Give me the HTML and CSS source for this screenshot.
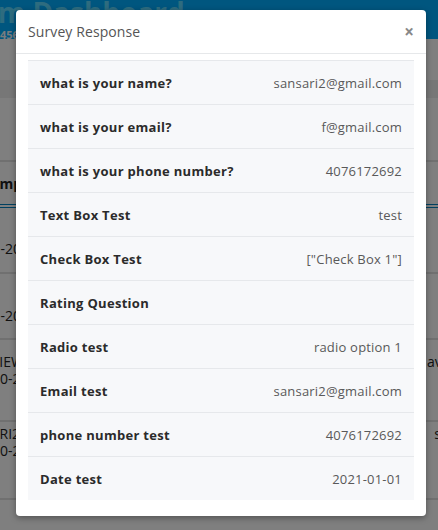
FILE: index.html
```html
<!DOCTYPE html>
<html>
<head>
<meta charset="utf-8">
<link rel="stylesheet" href="styles.css">
</head>
<body>
<div class="page">
  <div class="topbar">
    <div class="brand">Survey Form Dashboard</div>
    <div class="sub">4567 entries</div>
  </div>
  <div class="gap1"></div>
  <div class="band"></div>
  <div class="gap2"></div>
  <div class="thead"><span class="c1">Timp</span><span class="c2"></span></div>
  <div class="trow r1"><div class="c1"><div class="l-date">2021-01-20</div></div></div>
  <div class="trow r2"><div class="c1"><div class="l-date">2021-01-20</div></div></div>
  <div class="trow r3"><div class="c1"><div class="l-a">VIEW</div><div class="l-b">2020-21</div></div><span class="c2">avis</span></div>
  <div class="trow r4"><div class="c1"><div class="l-c">SARI2</div><div class="l-b">2020-21</div></div><span class="c2">s</span></div>
</div>

<div class="backdrop">
  <div class="modal">
    <div class="modal-header">
      <span class="title">Survey Response</span>
      <span class="close">&times;</span>
    </div>
    <div class="modal-body">
      <div class="list">
        <div class="row"><span class="q">what is your name?</span><span class="a">sansari2@gmail.com</span></div>
        <div class="row"><span class="q">what is your email?</span><span class="a">f@gmail.com</span></div>
        <div class="row"><span class="q">what is your phone number?</span><span class="a">4076172692</span></div>
        <div class="row"><span class="q">Text Box Test</span><span class="a">test</span></div>
        <div class="row"><span class="q">Check Box Test</span><span class="a">["Check Box 1"]</span></div>
        <div class="row"><span class="q">Rating Question</span><span class="a"></span></div>
        <div class="row"><span class="q">Radio test</span><span class="a">radio option 1</span></div>
        <div class="row"><span class="q">Email test</span><span class="a">sansari2@gmail.com</span></div>
        <div class="row"><span class="q">phone number test</span><span class="a">4076172692</span></div>
        <div class="row"><span class="q">Date test</span><span class="a">2021-01-01</span></div>
      </div>
    </div>
  </div>
</div>
</body>
</html>
```
FILE: styles.css
```css
* { box-sizing: border-box; }
html, body { margin: 0; padding: 0; }
body {
  width: 438px;
  height: 530px;
  overflow: hidden;
  position: relative;
  font-family: "Open Sans", "DejaVu Sans", sans-serif;
  background: #ffffff;
}
.page {
  width: 438px;
  height: 530px;
  overflow: hidden;
  background: #ffffff;
}
.topbar {
  height: 39px;
  background: #00acfe;
  overflow: hidden;
}
.brand {
  margin-top: -5px;
  margin-left: -150px;
  font-size: 28px;
  font-weight: 700;
  color: #5cd8ff;
  white-space: nowrap;
  line-height: 34px;
}
.sub {
  margin-top: 0;
  margin-left: 0;
  font-size: 11px;
  font-weight: 700;
  color: #f0f8ff;
  white-space: nowrap;
  line-height: 12px;
}
.gap1 { height: 41px; }
.band { height: 18px; background: #eeeeee; }
.gap2 { height: 64px; border-bottom: 2px solid #e0e0e0; }
.thead {
  height: 46px;
  display: flex;
  align-items: center;
  border-bottom: 4px double #0080c0;
  font-weight: 700;
  font-size: 14px;
  color: #222;
}
.c1 { margin-left: -13px; white-space: nowrap; }
.c2 { margin-left: auto; white-space: nowrap; }
.trow {
  display: flex;
  align-items: flex-start;
  border-bottom: 2px solid #e0e0e0;
  font-size: 14px;
  color: #222;
  line-height: 17px;
}
.trow .c1 { margin-left: 0; }
.l-date { margin-left: -52px; }
.l-a { margin-left: -9px; }
.l-b { margin-left: -24px; }
.l-c { margin-left: -17px; }
.r1 { height: 66px; padding-top: 32px; }
.r2 { height: 66px; padding-top: 33px; }
.r3 { height: 82px; padding-top: 13px; }
.r4 { height: 78px; padding-top: 3px; }
.r3 .c2 { margin-right: -14px; }
.r4 .c2 { margin-right: -3px; }

.backdrop {
  position: absolute;
  left: 0; top: 0;
  width: 438px; height: 530px;
  background: rgba(0, 0, 0, 0.5);
}
.modal {
  position: absolute;
  left: 16px; top: 10px;
  width: 410px;
  height: 506px;
  background: #ffffff;
  border-radius: 4px;
  box-shadow: 0 2px 6px rgba(0,0,0,0.35);
  display: flex;
  flex-direction: column;
}
.modal-header {
  height: 44px;
  border-bottom: 1px solid #e6e8ea;
  display: flex;
  align-items: center;
  padding: 0 12px;
}
.title {
  font-size: 14px;
  color: #555;
  font-weight: 400;
  letter-spacing: 0.1px;
}
.close {
  margin-left: auto;
  font-size: 17px;
  font-weight: 700;
  color: #888;
  line-height: 1;
}
.modal-body {
  padding: 6px 12px 15px;
}
.list {
  background: #f7f8fa;
}
.row {
  height: 44px;
  display: flex;
  align-items: center;
  justify-content: space-between;
  padding: 0 12px;
  border-top: 1px solid #e6e8eb;
}
.q {
  font-size: 13px;
  font-weight: 700;
  color: #2b2b2b;
  letter-spacing: 0.3px;
}
.a {
  font-size: 13px;
  font-weight: 400;
  color: #595959;
  letter-spacing: 0.2px;
}
```
